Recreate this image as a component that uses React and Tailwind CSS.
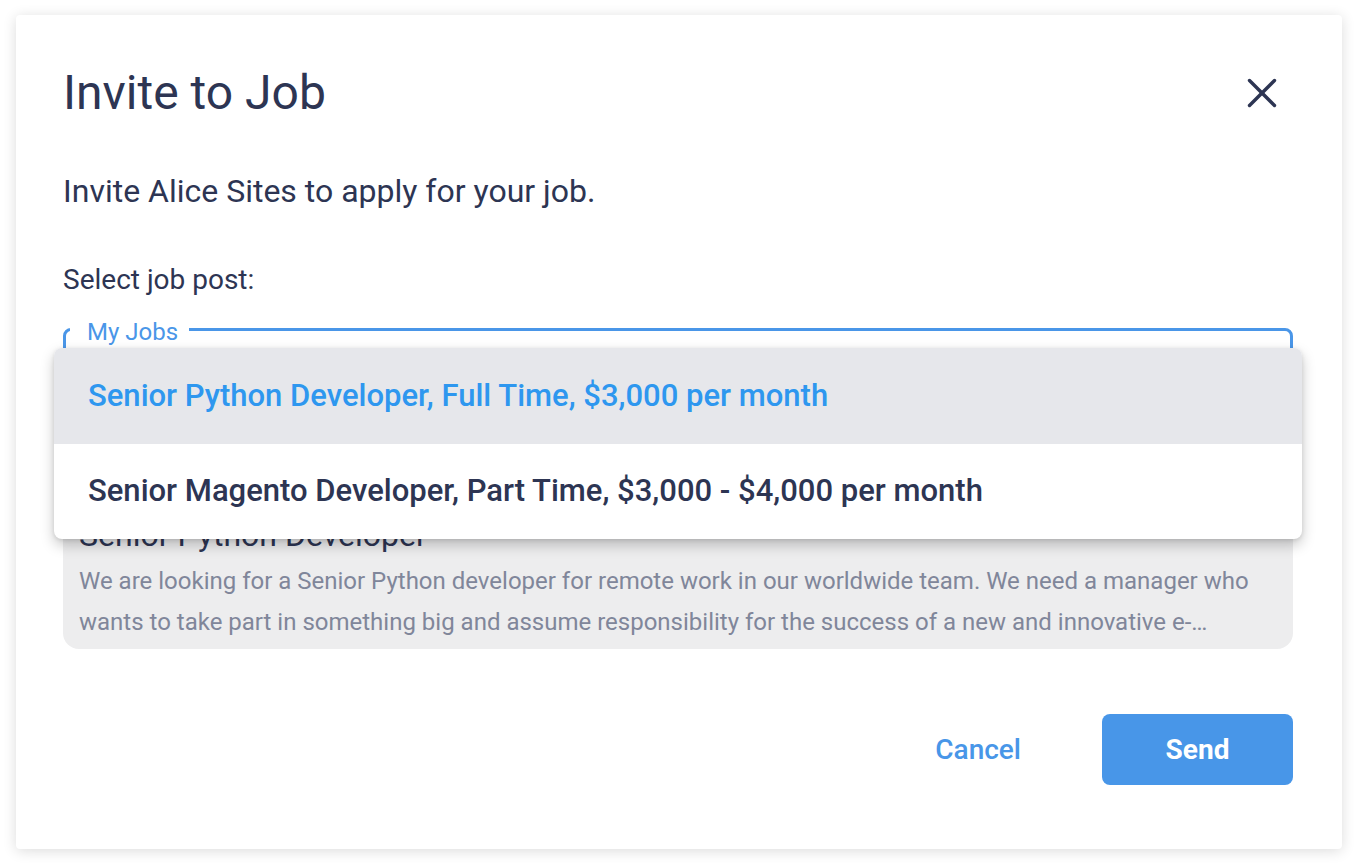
import { useState } from 'react';

const jobs = [
  'Senior Python Developer, Full Time, $3,000 per month',
  'Senior Magento Developer, Part Time, $3,000 - $4,000 per month',
];

export default function App() {
  const [selected, setSelected] = useState(0);

  return (
    <div className="min-h-screen bg-white pt-[15px] pl-4 font-['Roboto',sans-serif] text-[#2d3553]">
      {/* Dialog */}
      <div className="w-[1326px] h-[834px] bg-white rounded-sm shadow-[0_2px_14px_rgba(0,0,0,0.14)] pl-[47px] pr-[49px] pt-[43px] flex flex-col">
        <div className="flex items-center justify-between">
          <h1 className="text-[48px] leading-[70px] font-normal">Invite to Job</h1>
          <button className="w-10 h-10 flex items-center justify-center mr-[11px] text-[#2d3553]">
            <svg width="30" height="30" viewBox="0 0 30 30" fill="none" stroke="currentColor" strokeWidth="3.4" strokeLinecap="round">
              <path d="M2.5 2.5 27.5 27.5" />
              <path d="M27.5 2.5 2.5 27.5" />
            </svg>
          </button>
        </div>

        <p className="mt-[43px] text-[32px] leading-[40px]">Invite Alice Sites to apply for your job.</p>

        <p className="mt-[52px] text-[28px] leading-[34px]">Select job post:</p>

        {/* Select field with open menu */}
        <div className="relative mt-[18px]">
          <fieldset className="border-[3px] border-[#4a96e8] rounded-lg h-[89px] px-[4px]">
            <legend className="pl-[17px] pr-[11px] pt-[5px] text-[24px] leading-[24px] text-[#4a96e8]">My Jobs</legend>
          </fieldset>

          <ul className="absolute left-[-9px] top-[33px] w-[1248px] bg-white rounded-lg overflow-hidden shadow-[0_6px_14px_rgba(0,0,0,0.22),0_1px_4px_rgba(0,0,0,0.1)] z-10">
            {jobs.map((job, idx) => (
              <li
                key={idx}
                onClick={() => setSelected(idx)}
                className={`h-[96px] last:h-[95px] flex items-center px-[34px] text-[31px] font-medium cursor-pointer ${
                  idx === selected ? 'bg-[#e6e7eb] text-[#2e97ef]' : 'text-[#2d3553]'
                }`}
              >
                {job}
              </li>
            ))}
          </ul>
        </div>

        {/* Job preview card */}
        <div className="mt-[24px] bg-[#ededee] rounded-2xl px-4 pt-[89px] pb-[6px]">
          <h3 className="text-[32px] leading-[36px]">Senior Python Developer</h3>
          <p className="mt-[8px] text-[24px] leading-[41px] text-[#80869a] line-clamp-2">
            We are looking for a Senior Python developer for remote work in our worldwide team. We need a manager who wants to take part in something big and assume responsibility for the success of a new and innovative e-commerce business.
          </p>
        </div>

        {/* Actions */}
        <div className="mt-[65px] flex justify-end items-center gap-[49px]">
          <button className="h-[71px] px-8 text-[28px] font-medium text-[#4896e8]">Cancel</button>
          <button className="w-[191px] h-[71px] rounded-lg bg-[#4896e8] text-white text-[28px] font-bold">Send</button>
        </div>
      </div>
    </div>
  );
}
